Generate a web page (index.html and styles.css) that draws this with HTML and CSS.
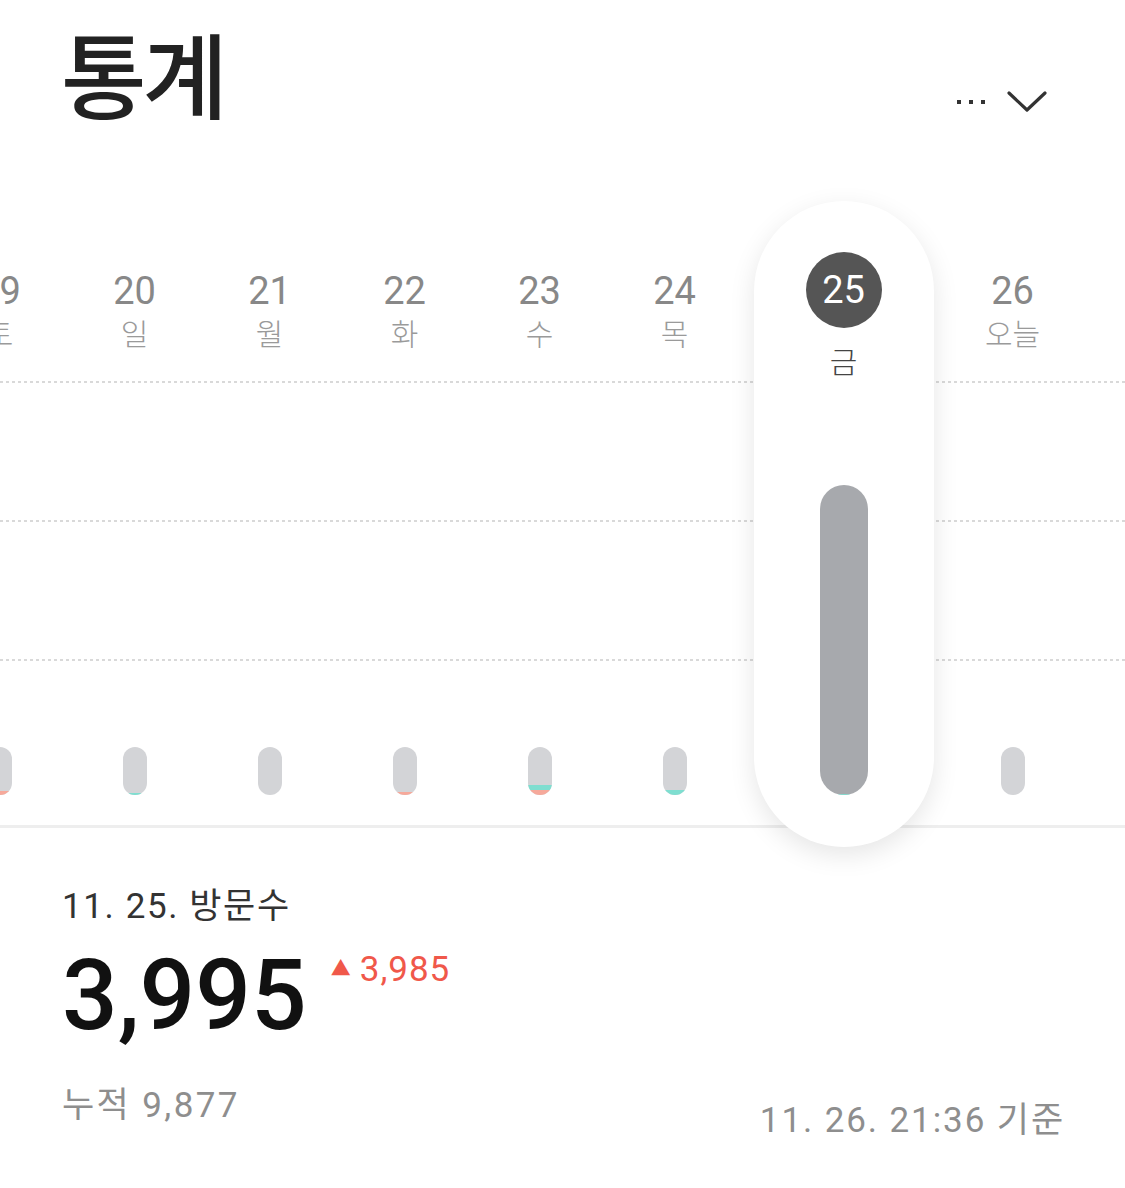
FILE: index.html
```html
<!DOCTYPE html>
<html lang="ko">
<head>
    <meta charset="UTF-8">
    <meta name="viewport" content="width=device-width, initial-scale=1.0">
    <title>통계</title>
    <link rel="stylesheet" href="styles.css">
</head>
<body>
    <header class="header">
        <h1>통계</h1>
        <div class="header-actions">
            <span class="more"><i></i><i></i><i></i></span>
            <svg class="chevron" width="40" height="22" viewBox="0 0 40 22">
                <path d="M2 2 L20 19 L38 2" fill="none" stroke="#333" stroke-width="3.2" stroke-linecap="round" stroke-linejoin="round"/>
            </svg>
        </div>
    </header>

    <section class="chart">
        <div class="grid">
            <div class="grid-line"></div>
            <div class="grid-line"></div>
            <div class="grid-line last"></div>
            <div class="base-line"></div>
        </div>
        <div class="days">
            <div class="day">
                <div class="date">19</div>
                <div class="weekday">토</div>
                <div class="bar"><span class="seg red" style="height:4px"></span></div>
            </div>
            <div class="day">
                <div class="date">20</div>
                <div class="weekday">일</div>
                <div class="bar"><span class="seg teal" style="height:2px"></span></div>
            </div>
            <div class="day">
                <div class="date">21</div>
                <div class="weekday">월</div>
                <div class="bar"></div>
            </div>
            <div class="day">
                <div class="date">22</div>
                <div class="weekday">화</div>
                <div class="bar"><span class="seg red" style="height:3px"></span></div>
            </div>
            <div class="day">
                <div class="date">23</div>
                <div class="weekday">수</div>
                <div class="bar"><span class="seg teal" style="height:5px"></span><span class="seg red" style="height:5px"></span></div>
            </div>
            <div class="day">
                <div class="date">24</div>
                <div class="weekday">목</div>
                <div class="bar"><span class="seg teal" style="height:5px"></span></div>
            </div>
            <div class="day selected">
                <div class="date">25</div>
                <div class="weekday">금</div>
                <div class="bar big" style="height:310px"><span class="seg teal" style="height:1px"></span></div>
            </div>
            <div class="day">
                <div class="date">26</div>
                <div class="weekday">오늘</div>
                <div class="bar"></div>
            </div>
        </div>
    </section>

    <section class="summary">
        <div class="summary-title">11. 25. 방문수</div>
        <div class="visits">
            <span class="visits-count">3,995</span>
            <span class="visits-diff"><span class="up">▲</span>3,985</span>
        </div>
        <div class="summary-foot">
            <span class="total">누적 9,877</span>
            <span class="updated">11. 26. 21:36 기준</span>
        </div>
    </section>
</body>
</html>
```

FILE: styles.css
```css
body {
    margin: 0;
    background: #fff;
    font-family: Roboto, "Noto Sans CJK KR", sans-serif;
    color: #222;
    overflow: hidden;
}
.header {
    display: flex;
    justify-content: space-between;
    align-items: flex-start;
    padding: 0 78px 0 62px;
    height: 201px;
}
h1 {
    margin: 30px 0 0 -1px;
    font-size: 93px;
    line-height: 1.1;
    font-weight: 500;
    letter-spacing: -4px;
    color: #222;
}
.header-actions {
    display: flex;
    align-items: center;
    gap: 22px;
    margin-top: 91px;
}
.more {
    display: flex;
    gap: 8px;
}
.more i {
    width: 4px;
    height: 4px;
    background: #333;
}
.chart {
    position: relative;
    height: 646px;
}
.grid {
    position: absolute;
    left: 0;
    right: 0;
    top: 180px;
    display: flex;
    flex-direction: column;
}
.grid-line {
    height: 139px;
    background: repeating-linear-gradient(90deg, #d9d9d9 0 3px, transparent 3px 6px) top / 100% 2px no-repeat;
}
.grid-line.last {
    height: 166px;
}
.base-line {
    height: 3px;
    background: #eeeeee;
}
.days {
    position: relative;
    display: flex;
    height: 100%;
    margin-left: -68px;
}
.day {
    width: 135px;
    flex-shrink: 0;
    display: flex;
    flex-direction: column;
    align-items: center;
    padding: 69px 0 52px;
    box-sizing: border-box;
}
.date {
    font-size: 38px;
    line-height: 42px;
    color: #888;
}
.weekday {
    margin-top: 2px;
    font-size: 30px;
    line-height: 42px;
    color: #9a9a9a;
    font-weight: 300;
}
.bar {
    margin-top: auto;
    width: 24px;
    height: 48px;
    border-radius: 12px;
    background: #d3d4d7;
    overflow: hidden;
    display: flex;
    flex-direction: column;
    justify-content: flex-end;
}
.bar.big {
    width: 48px;
    border-radius: 24px;
    background: #a7a9ad;
}
.seg.red {
    background: #f6a99b;
}
.seg.teal {
    background: #7fded0;
}
.day.selected {
    width: 180px;
    margin: 0 11.5px;
    padding-top: 51px;
    background: #fff;
    border-radius: 90px;
    box-shadow: 0 8px 26px rgba(0, 0, 0, 0.1);
}
.day.selected .date {
    width: 76px;
    height: 76px;
    border-radius: 50%;
    background: #555;
    color: #fff;
    display: flex;
    align-items: center;
    justify-content: center;
}
.day.selected .weekday {
    margin-top: 14px;
    color: #444;
}
.summary {
    padding: 38px 62px 0;
}
.summary-title {
    font-size: 35px;
    line-height: 44px;
    letter-spacing: 1.6px;
    color: #333;
}
.visits {
    display: flex;
    align-items: flex-start;
    margin-top: 17px;
}
.visits-count {
    font-size: 98px;
    line-height: 100px;
    font-weight: 500;
    color: #111;
}
.visits-diff {
    margin: 3px 0 0 24px;
    font-size: 35px;
    line-height: 40px;
    letter-spacing: 1px;
    color: #f0584a;
}
.up {
    font-size: 20px;
    vertical-align: 5px;
    margin-right: 8px;
}
.summary-foot {
    display: flex;
    justify-content: space-between;
    align-items: flex-start;
    margin-top: 38px;
    color: #8e8e8e;
    font-size: 35px;
    line-height: 44px;
    letter-spacing: 2.4px;
}
.updated {
    margin-top: 15px;
    margin-right: -2px;
    letter-spacing: 1.9px;
}
```
